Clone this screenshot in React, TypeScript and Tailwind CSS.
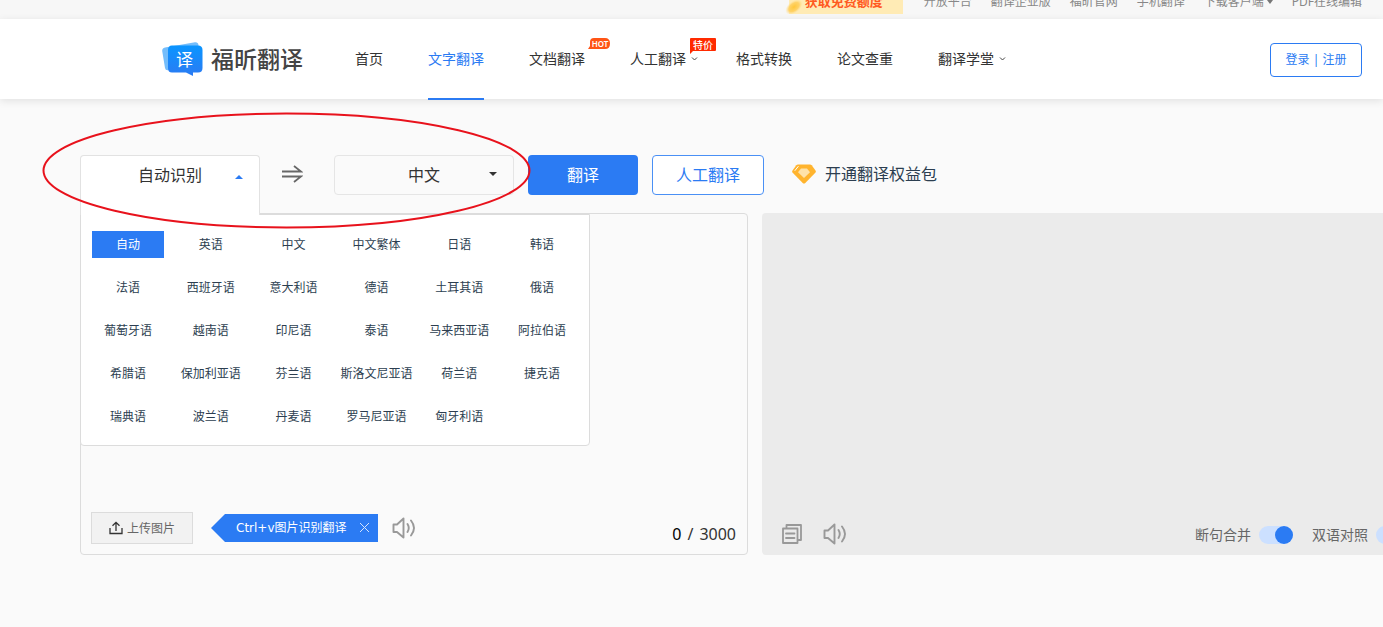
import { useState } from 'react'

const TOP_LINKS = ['开放平台', '翻译企业版', '福昕官网', '手机翻译', '下载客户端', 'PDF在线编辑']

interface NavItem {
  label: string
  active?: boolean
  hasMenu?: boolean
  badge?: 'hot' | 'sale'
}

const NAV_ITEMS: NavItem[] = [
  { label: '首页' },
  { label: '文字翻译', active: true },
  { label: '文档翻译', badge: 'hot' },
  { label: '人工翻译', badge: 'sale', hasMenu: true },
  { label: '格式转换' },
  { label: '论文查重' },
  { label: '翻译学堂', hasMenu: true }
]

const LANGUAGES = [
  '自动', '英语', '中文', '中文繁体', '日语', '韩语',
  '法语', '西班牙语', '意大利语', '德语', '土耳其语', '俄语',
  '葡萄牙语', '越南语', '印尼语', '泰语', '马来西亚语', '阿拉伯语',
  '希腊语', '保加利亚语', '芬兰语', '斯洛文尼亚语', '荷兰语', '捷克语',
  '瑞典语', '波兰语', '丹麦语', '罗马尼亚语', '匈牙利语'
]

const MAX_LENGTH = 3000

const TopBar = () => (
  <div className="flex h-[19px] items-end justify-end overflow-hidden bg-[#f7f7f7] pr-[21px] text-xs text-[#888]">
    <div className="flex h-[34px] shrink-0 items-center gap-[19px]">
      <a href="#" className="relative mr-0.5 flex h-6 w-[114px] items-center bg-[#ffebb5] pl-4 text-[13px] font-bold text-[#ff5a1f]">
        <svg className="absolute bottom-0 -left-1 h-4 w-6" viewBox="0 0 24 16" fill="none">
          <defs>
            <radialGradient id="coinFill">
              <stop offset="0" stopColor="#ffc63a" />
              <stop offset="0.6" stopColor="#ffd060" stopOpacity="0.9" />
              <stop offset="1" stopColor="#ffe29a" stopOpacity="0" />
            </radialGradient>
          </defs>
          <ellipse cx="9" cy="9" rx="10" ry="6" transform="rotate(-38 9 9)" fill="url(#coinFill)" />
        </svg>
        <span className="relative">获取免费额度</span>
      </a>
      {TOP_LINKS.map((label) => (
        <a key={label} href="#" className="flex items-center gap-[3px] whitespace-nowrap">
          {label}
          {label === '下载客户端' && (
            <svg className="h-1 w-1.5" viewBox="0 0 6 4"><path d="M0 0h6L3 4z" fill="#777" /></svg>
          )}
        </a>
      ))}
    </div>
  </div>
)

const Logo = () => (
  <a href="#" className="flex shrink-0 items-center gap-2">
    <svg className="h-[34px] w-[41px]" viewBox="0 0 41 34">
      <defs>
        <linearGradient id="logoFill" x1="0" y1="0" x2="0" y2="1">
          <stop offset="0" stopColor="#0a95ff" />
          <stop offset="1" stopColor="#2b7bf3" />
        </linearGradient>
      </defs>
      <path d="M3 5.500 33 .300Q36 0 36.500 3L37 8 7 28Q3.500 29 3 26L.200 9Q0 6 3 5.500Z" fill="#74bdfb" />
      <path d="M10 3.500H36Q40.500 3.500 40.500 8V26Q40.500 30.500 36 30.500H31V34L24 30.500H10Q6 30.500 6 26V8Q6 3.500 10 3.500Z" fill="url(#logoFill)" />
      <text x="22.500" y="23.500" textAnchor="middle" fontSize="17" fill="#fff">译</text>
    </svg>
    <span className="text-[23px] leading-8 font-medium text-[#444]">福昕翻译</span>
  </a>
)

const NavBadge = ({ type }: { type: 'hot' | 'sale' }) => {
  if (type === 'hot') {
    return (
      <svg className="absolute top-[19px] left-[59px] h-[11px] w-[22px]" viewBox="0 0 22 11">
        <path d="M6 0H17Q22 0 22 5.500T17 11H0L2 8V4Q2 0 6 0Z" fill="#ff5415" />
        <text x="12" y="8.500" textAnchor="middle" fontSize="8" fontWeight="600" fill="#fff">HOT</text>
      </svg>
    )
  }
  return (
    <svg className="absolute top-[19px] left-[60px] h-4 w-[26px]" viewBox="0 0 26 16">
      <path d="M1 0H25Q26 0 26 1V12Q26 13 25 13H3L0 16V1Q0 0 1 0Z" fill="#ff2a00" />
      <text x="13" y="10.500" textAnchor="middle" fontSize="10" fontWeight="500" fill="#fff">特价</text>
    </svg>
  )
}

const Header = () => (
  <header className="relative flex h-20 items-center bg-white pr-[21px] pl-[162px] shadow-[0_2px_8px_rgba(0,0,0,0.1)]">
    <Logo />
    <nav className="ml-[52px] flex items-center gap-[45px] text-sm">
      {NAV_ITEMS.map((item) => (
        <a
          key={item.label}
          href="#"
          className={`relative flex h-20 items-center gap-[5px] whitespace-nowrap ${item.active ? 'text-[#2b7bf3]' : 'text-[#333]'} ${item.hasMenu ? '-mr-[7px]' : ''}`}
        >
          {item.label}
          {item.badge && <NavBadge type={item.badge} />}
          {item.hasMenu && (
            <svg className="h-1 w-[7px]" viewBox="0 0 7 4" fill="none">
              <path d="M1 .500 3.500 3 6 .500" stroke="#444" />
            </svg>
          )}
          {item.active && <span className="absolute inset-x-0 -bottom-px h-0.5 bg-[#2b7bf3]" />}
        </a>
      ))}
    </nav>
    <button className="mt-0.5 ml-auto h-[34px] w-[92px] rounded border border-[#2b7bf3] text-xs whitespace-nowrap text-[#2b7bf3]">
      登录 | 注册
    </button>
  </header>
)

interface LanguagePickerProps {
  value: string
  onChange: (language: string) => void
}

const LanguagePicker = ({ value, onChange }: LanguagePickerProps) => {
  const [isOpen, setIsOpen] = useState(true)

  return (
    <div className="relative z-10 w-[180px]">
      <button
        aria-expanded={isOpen}
        onClick={() => setIsOpen(!isOpen)}
        className={`relative z-20 flex w-full items-start rounded-t border border-[#e2e2e2] bg-white text-base text-[#333] ${isOpen ? 'h-[60px] border-b-0' : 'h-10 rounded-b'}`}
      >
        <span className="w-full text-center leading-[38px]">{value === '自动' ? '自动识别' : value}</span>
        <svg className={`absolute top-[19px] right-4 h-1 w-2 ${isOpen ? '' : 'rotate-180'}`} viewBox="0 0 8 4">
          <path d="M0 4h8L4 0z" fill="#2b7bf3" />
        </svg>
      </button>
      {isOpen && (
        <div className="absolute top-[59px] left-0 grid w-[510px] grid-cols-6 gap-x-[11px] gap-y-4 rounded-b border border-[#dcdcdc] bg-white px-[11px] pt-4 pb-[15px]">
          {LANGUAGES.map((language) => (
            <button
              key={language}
              onClick={() => onChange(language)}
              className={`h-[27px] text-xs whitespace-nowrap ${language === value ? 'bg-[#2b7bf3] text-white' : 'text-[#2c3e50]'}`}
            >
              {language}
            </button>
          ))}
        </div>
      )}
    </div>
  )
}

const SpeakerIcon = () => (
  <svg className="h-[22px] w-6" viewBox="0 0 24 22" fill="none" stroke="#999" strokeWidth="1.900" strokeLinejoin="round" strokeLinecap="round">
    <path d="M1.500 7.500H5L11.500 1.500V20.500L5 15H1.500Z" />
    <path d="M15.500 7Q18 11 15.500 15M19 3.500Q25 11 19 18.500" />
  </svg>
)

const CopyIcon = () => (
  <svg className="h-5 w-5" viewBox="0 0 20 20" fill="none" stroke="#999" strokeWidth="1.800" strokeLinejoin="round" strokeLinecap="round">
    <path d="M4.500 3.500V1H19V16H16.500" />
    <path d="M1 4.500H15.500V19H1ZM4 9.500H12.500M4 14H12.500" />
  </svg>
)

const Switch = ({ label }: { label: string }) => (
  <label className="flex shrink-0 items-center gap-2 text-sm text-[#666]">
    {label}
    <input
      type="checkbox"
      role="switch"
      defaultChecked
      className="flex h-[18px] w-[34px] appearance-none items-center rounded-full bg-[#d0d0d0] before:size-[18px] before:rounded-full before:bg-white checked:justify-end checked:bg-[#cce0ff] checked:before:bg-[#2b7bf3]"
    />
  </label>
)

const SourcePanel = () => {
  const [text, setText] = useState('')
  const [showTip, setShowTip] = useState(true)

  return (
    <section className="flex h-[342px] flex-col rounded border border-[#dcdcdc]">
      <textarea
        aria-label="原文"
        value={text}
        maxLength={MAX_LENGTH}
        onChange={(e) => setText(e.target.value)}
        className="min-h-0 w-full flex-1 resize-none p-4 outline-none"
      />
      <div className="flex h-[52px] shrink-0 items-center px-2.5 pb-px">
        <button className="flex h-8 w-[102px] items-center justify-center gap-1 border border-[#dcdcdc] bg-[#f2f2f2] text-xs text-[#666]">
          <svg className="h-3.5 w-3.5" viewBox="0 0 14 14" fill="none" stroke="#333" strokeWidth="1.300">
            <path d="M1 7V12.500H13V7M7 10V1.500M3.500 4.800 7 1.300 10.500 4.800" />
          </svg>
          <span className="pt-[3px]">上传图片</span>
        </button>
        {showTip && (
          <div className="ml-[18px] flex h-7 items-center">
            <svg className="h-7 w-3.5" viewBox="0 0 14 28"><path d="M14 0V28L0 14Z" fill="#2b7bf3" /></svg>
            <div className="flex h-7 w-[153px] items-center justify-between bg-[#2b7bf3] pr-2 pl-[11px] font-['DejaVu_Sans','Noto_Sans_CJK_SC',sans-serif] text-xs whitespace-nowrap text-white">
              Ctrl+v图片识别翻译
              <button aria-label="关闭" onClick={() => setShowTip(false)}>
                <svg className="h-[11px] w-[11px]" viewBox="0 0 11 11" stroke="#d5e5fd"><path d="M1 1 10 10M10 1 1 10" /></svg>
              </button>
            </div>
          </div>
        )}
        <button aria-label="朗读原文" className="ml-3.5"><SpeakerIcon /></button>
        <div className="ml-auto flex gap-1.5 pt-3 pr-px text-base text-[#333]">
          <span className="text-black">{text.length}</span>
          <span>/</span>
          <span>{MAX_LENGTH}</span>
        </div>
      </div>
    </section>
  )
}

const ResultPanel = () => (
  <section className="flex h-[342px] flex-col justify-end rounded bg-[#ebebeb]">
    <div className="flex h-10 items-center px-5">
      <button aria-label="复制译文" className="pb-0.5"><CopyIcon /></button>
      <button aria-label="朗读译文" className="ml-[21px] pb-0.5"><SpeakerIcon /></button>
      <div className="ml-auto flex gap-[19px]">
        <Switch label="断句合并" />
        <Switch label="双语对照" />
      </div>
    </div>
  </section>
)

const App = () => {
  const [source, setSource] = useState('自动')
  const [target, setTarget] = useState('中文')

  return (
    <div className="min-h-screen overflow-x-hidden bg-[#fafafa] font-['Noto_Sans','Noto_Sans_CJK_SC',sans-serif]">
      <TopBar />
      <Header />
      <main className="relative pt-14 pb-[72px] pl-20">
        {/* Language selection */}
        <div className="flex h-10 items-start">
          <LanguagePicker value={source} onChange={setSource} />
          <button aria-label="交换语言" className="ml-[21px] flex h-[38px] items-center">
            <svg className="h-[18px] w-[22px]" viewBox="0 0 22 18" fill="none" stroke="#666" strokeWidth="1.800">
              <path d="M1 6.500H20L13 1M1 11.500H20L13 17" />
            </svg>
          </button>
          <div className="relative ml-[31px] w-[180px]">
            <select
              aria-label="目标语言"
              value={target}
              onChange={(e) => setTarget(e.target.value)}
              className="h-10 w-full appearance-none rounded border border-[#e5e5e5] text-base text-[#333] [text-align-last:center]"
            >
              {LANGUAGES.slice(1).map((language) => (
                <option key={language}>{language}</option>
              ))}
            </select>
            <svg className="pointer-events-none absolute top-[17px] right-[17px] h-1 w-2" viewBox="0 0 8 4">
              <path d="M0 0h8L4 4z" fill="#333" />
            </svg>
          </div>
          <button className="ml-3.5 h-10 w-[110px] rounded bg-[#2b7bf3] text-base text-white">翻译</button>
          <button className="ml-3.5 h-10 w-[112px] rounded border border-[#4a90f5] bg-white text-base text-[#2b7bf3]">人工翻译</button>
          <a href="#" className="ml-7 flex h-[38px] items-center gap-[9px] text-base whitespace-nowrap text-[#2c3e50]">
            <svg className="h-5 w-6" viewBox="0 0 24 20">
              <path d="M6 .500H18Q19 .500 19.700 1.300L23.500 6.500Q24.300 7.700 23.300 8.800L13.300 19Q12 20 10.700 19L.700 8.800Q-.300 7.700 .500 6.500L4.300 1.300Q5 .500 6 .500Z" fill="#ffb42e" />
              <path d="M9 4.500H15L18 8.200 12 14 6 8.200Z" fill="#ffe2a8" />
              <path d="M3 6.500 6.200 2.500" stroke="#fff" strokeLinecap="round" />
            </svg>
            开通翻译权益包
          </a>
        </div>

        {/* The result panel runs past the right edge of the window */}
        <div className="mt-[18px] -mr-[47px] grid grid-cols-2 gap-3.5">
          <SourcePanel />
          <ResultPanel />
        </div>

        {/* Hand-drawn highlight around the language boxes */}
        <svg className="pointer-events-none absolute top-3 left-10 z-30 h-[120px] w-[494px]" viewBox="0 0 494 120" fill="none">
          <ellipse cx="246.500" cy="59.500" rx="243" ry="57" stroke="#e8121c" strokeWidth="2" />
        </svg>
      </main>
    </div>
  )
}

export default App
